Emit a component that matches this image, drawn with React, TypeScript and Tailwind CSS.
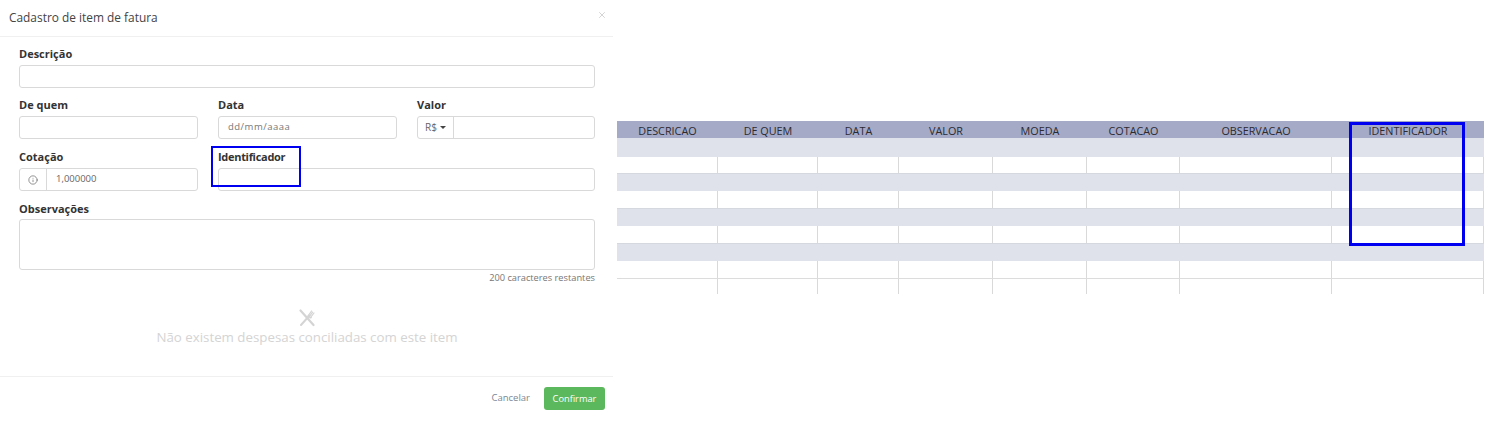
import { X, Info } from "lucide-react"

const inputClass = "h-[23px] w-full rounded-[3px] border border-[#d9d9d9] bg-white"
const labelClass = "block text-[11px] leading-[14px] font-bold text-[#333]"
const formRow = "grid grid-cols-[179px_179px_178px] gap-x-[20px]"

const columns = "grid grid-cols-[101px_100px_81px_94px_94px_93px_152px_152px]"
const headers = ["DESCRICAO", "DE QUEM", "DATA", "VALOR", "MOEDA", "COTACAO", "OBSERVACAO", "IDENTIFICADOR"]

function WhiteRow({ height, bottom }: { height: string; bottom?: boolean }) {
  return (
    <div className={`${columns} ${height} ${bottom ? "border-b border-[#dcdcdc]" : ""}`}>
      {headers.map((h) => (
        <div key={h} className="border-r border-[#d9d9d9]" />
      ))}
    </div>
  )
}

function Band({ first }: { first?: boolean }) {
  return <div className={`bg-[#dfe2eb] ${first ? "h-[19px]" : "h-[18px] border-t border-[#d6d8e0]"}`} />
}

export default function App() {
  return (
    <div className="flex h-[428px] w-[1502px] bg-white font-['Open_Sans',sans-serif]">
      {/* Modal */}
      <div className="flex w-[613px] flex-col">
        <div className="flex h-[37px] items-start justify-between border-b border-[#f0f0f0] pl-[9px] pr-[6px] pt-[9px]">
          <h4 className="text-[11.9px] leading-[17px] text-[#444]">Cadastro de item de fatura</h4>
          <X size={10} strokeWidth={1.75} className="mt-[1px] text-[#c4c4c4]" />
        </div>

        <div className="relative flex-1 pl-[19px] pr-[18px] pt-[10px]">
          <label className={labelClass}>Descrição</label>
          <div className={`${inputClass} mt-[4px]`} />

          <div className={`mt-[10px] ${formRow}`}>
            <div>
              <label className={labelClass}>De quem</label>
              <div className={`${inputClass} mt-[4px]`} />
            </div>
            <div>
              <label className={labelClass}>Data</label>
              <div className={`${inputClass} mt-[4px] flex items-center pl-[9px] text-[9.5px] tracking-[0.5px] text-[#777]`}>
                dd/mm/aaaa
              </div>
            </div>
            <div>
              <label className={labelClass}>Valor</label>
              <div className={`${inputClass} mt-[4px] flex`}>
                <div className="flex w-[36px] items-center justify-center gap-[3px] border-r border-[#d9d9d9] text-[10px] text-[#666]">
                  R$
                  <svg width="6" height="3" viewBox="0 0 6 3">
                    <path d="M0 0h6L3 3z" fill="#444" />
                  </svg>
                </div>
              </div>
            </div>
          </div>

          <div className={`mt-[11px] ${formRow}`}>
            <div>
              <label className={labelClass}>Cotação</label>
              <div className={`${inputClass} mt-[4px] flex`}>
                <div className="flex w-[27px] items-center justify-center border-r border-[#d9d9d9]">
                  <Info size={10} strokeWidth={1.5} className="text-[#555]" />
                </div>
                <div className="flex items-center pl-[9px] text-[9.5px] text-[#666]">1,000000</div>
              </div>
            </div>
            <div className="col-span-2">
              <label className={`${labelClass} tracking-[-0.3px]`}>Identificador</label>
              <div className={`${inputClass} mt-[4px]`} />
            </div>
          </div>

          <label className={`${labelClass} mt-[11px]`}>Observações</label>
          <div className="mt-[3px] h-[51px] w-full rounded-[3px] border border-[#d9d9d9]" />
          <p className="mt-[1px] text-right text-[9.25px] leading-[14px] text-[#777]">200 caracteres restantes</p>

          <div className="mt-[24px] flex flex-col items-center">
            {/* crossed fork and knife */}
            <svg width="18" height="18" viewBox="0 0 18 18" fill="none" stroke="#d4d4d4" strokeLinecap="round">
              <path d="M2.5 1.5 15.5 16" strokeWidth="2.2" />
              <path d="M11.5 6.5 3 16" strokeWidth="2" />
              <path d="M9.8 7.2 13.6 2M11 8l3.6-4.8M12.2 8.8 16 4M10.2 7.6c1 1.2 2.4 1.6 3.2 1" strokeWidth="1.2" />
            </svg>
            <p className="mt-[1px] text-[13.3px] leading-[18px] text-[#d4d4d4]">Não existem despesas conciliadas com este item</p>
          </div>

          {/* Highlight */}
          <div className="absolute left-[211px] top-[109px] h-[41px] w-[90px] border-2 border-[#0000f0]" />
        </div>

        <div className="mb-[18px] flex h-[34px] items-end justify-end gap-[14px] border-t border-[#f0f0f0] pr-[8px]">
          <span className="pb-[5px] text-[9.5px] text-[#7a8795]">Cancelar</span>
          <button className="h-[23px] w-[61px] rounded-[3px] bg-[#5cb85c] text-[9.25px] font-medium text-white">Confirmar</button>
        </div>
      </div>

      {/* Spreadsheet */}
      <div className="relative ml-[4px] mt-[121px] h-[173px] w-[867px]">
        <div className={`${columns} h-[17px] bg-[#a5aac6] text-[10.8px] leading-[20px] text-[#2b2b33]`}>
          {headers.map((h) => (
            <div key={h} className="text-center">{h}</div>
          ))}
        </div>
        <Band first />
        <WhiteRow height="h-[16px]" />
        <Band />
        <WhiteRow height="h-[17px]" />
        <Band />
        <WhiteRow height="h-[17px]" />
        <Band />
        <WhiteRow height="h-[18px]" bottom />
        <WhiteRow height="h-[15px]" />
        <div className="absolute left-[732px] top-[1px] h-[124px] w-[116px] border-[3px] border-[#0000f0]" />
      </div>
    </div>
  )
}
